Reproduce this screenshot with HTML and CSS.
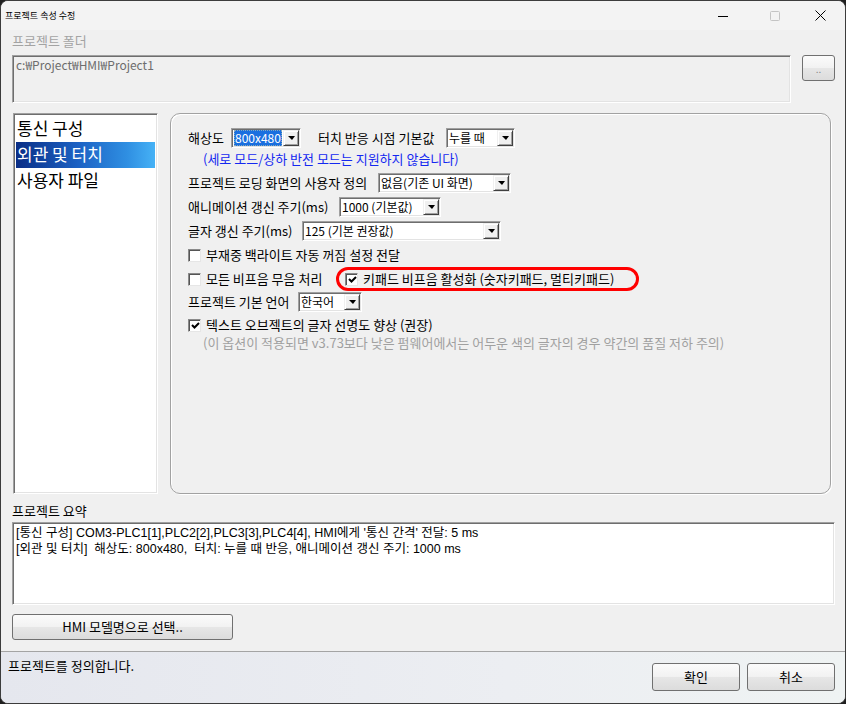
FILE: index.html
```html
<!DOCTYPE html>
<html>
<head>
    <meta charset="UTF-8">
    <title>프로젝트 속성 수정</title>
    <link rel="stylesheet" href="styles.css">
</head>
<body>
<div class="window">
    <div class="titlebar">
        <span class="title">프로젝트 속성 수정</span>
        <span class="cap min"><svg width="10" height="10"><path d="M0 5.5h10" stroke="#000" stroke-width="1"/></svg></span>
        <span class="cap max"><svg width="10" height="10"><rect x="0.5" y="0.5" width="9" height="9" rx="1" fill="none" stroke="#c4c4c4"/></svg></span>
        <span class="cap close"><svg width="11" height="11"><path d="M0.5 0.5L10.5 10.5M10.5 0.5L0.5 10.5" stroke="#000" stroke-width="1"/></svg></span>
    </div>

    <div class="content">
        <div class="label disabled">프로젝트 폴더</div>
        <div class="folder-row">
            <div class="textbox folder">c:₩Project₩HMI₩Project1</div>
            <a href="javascript:;" class="btn dots">..</a>
        </div>

        <div class="middle">
            <ul class="list">
                <li>통신 구성</li>
                <li class="on">외관 및 터치</li>
                <li>사용자 파일</li>
            </ul>

            <div class="panel">
                <div class="row">
                    <span class="lbl l-res">해상도</span>
                    <span class="combo c-res"><span class="val"><em class="sel">800x480</em></span><i class="arrow"></i></span>
                    <span class="lbl l-touch">터치 반응 시점 기본값</span>
                    <span class="combo c-touch"><span class="val">누를 때</span><i class="arrow"></i></span>
                </div>
                <div class="note">(세로 모드/상하 반전 모드는 지원하지 않습니다)</div>
                <div class="row">
                    <span class="lbl l-load">프로젝트 로딩 화면의 사용자 정의</span>
                    <span class="combo c-load"><span class="val">없음(기존 UI 화면)</span><i class="arrow"></i></span>
                </div>
                <div class="row">
                    <span class="lbl l-anim">애니메이션 갱신 주기(ms)</span>
                    <span class="combo c-anim"><span class="val">1000 (기본값)</span><i class="arrow"></i></span>
                </div>
                <div class="row">
                    <span class="lbl l-text">글자 갱신 주기(ms)</span>
                    <span class="combo c-text"><span class="val">125 (기본 권장값)</span><i class="arrow"></i></span>
                </div>
                <div class="row">
                    <label class="check"><i class="box"></i>부재중 백라이트 자동 꺼짐 설정 전달</label>
                </div>
                <div class="row">
                    <label class="check l-mute"><i class="box"></i>모든 비프음 무음 처리</label>
                    <div class="mark">
                        <label class="check"><i class="box on"><svg width="11" height="11"><path d="M2 5l2.5 2.5L9 3" fill="none" stroke="#000" stroke-width="2"/></svg></i>키패드 비프음 활성화 (숫자키패드, 멀티키패드)</label>
                    </div>
                </div>
                <div class="row short">
                    <span class="lbl l-lang">프로젝트 기본 언어</span>
                    <span class="combo c-lang"><span class="val">한국어</span><i class="arrow"></i></span>
                </div>
                <div class="row">
                    <label class="check"><i class="box on"><svg width="11" height="11"><path d="M2 5l2.5 2.5L9 3" fill="none" stroke="#000" stroke-width="2"/></svg></i>텍스트 오브젝트의 글자 선명도 향상 (권장)</label>
                </div>
                <div class="hint">(이 옵션이 적용되면 v3.73보다 낮은 펌웨어에서는 어두운 색의 글자의 경우 약간의 품질 저하 주의)</div>
            </div>
        </div>

        <div class="label summary-label">프로젝트 요약</div>
        <div class="summary">
            <p>[통신 구성] COM3-PLC1[1],PLC2[2],PLC3[3],PLC4[4], HMI에게 '통신 간격' 전달: 5 ms</p>
            <p>[외관 및 터치]&nbsp; 해상도: 800x480,&nbsp; 터치: 누를 때 반응, 애니메이션 갱신 주기: 1000 ms</p>
        </div>

        <a href="javascript:;" class="btn model">HMI 모델명으로 선택..</a>
    </div>

    <div class="status">
        <span class="status-text">프로젝트를 정의합니다.</span>
        <a href="javascript:;" class="btn ok">확인</a>
        <a href="javascript:;" class="btn cancel">취소</a>
    </div>
</div>
</body>
</html>
```

FILE: styles.css
```css
body, div, ul, li, a, p, span, label {
    margin: 0;
    padding: 0;
}

ul, li {
    list-style: none;
}

a {
    text-decoration: none;
    color: #000;
}

body {
    background: #1f1f1f;
    font-family: "Noto Sans CJK KR", "Noto Sans", sans-serif;
    font-size: 13px;
    line-height: 14px;
    color: #000;
}

/*창 틀*/
.window {
    width: 846px;
    height: 704px;
    box-sizing: border-box;
    border: 1px solid #3c3c3c;
    border-radius: 8px;
    overflow: hidden;
    background: #f0f0f0;
    display: flex;
    flex-direction: column;
}

.titlebar {
    height: 29px;
    flex-shrink: 0;
    display: flex;
    align-items: center;
    padding-left: 4px;
    background: #f3f3f3;
}

.titlebar .title {
    flex: 1;
    font-size: 9px;
}

.cap {
    display: flex;
    justify-content: center;
    align-items: center;
    height: 29px;
}

.cap.min {
    width: 64px;
}

.cap.max {
    width: 40px;
}

.cap.close {
    width: 50px;
}

/*본문*/
.content {
    padding: 4px 10px 0 11px;
}

.label {
    line-height: 14px;
}

.label.disabled {
    color: #a3a3a3;
}

.folder-row {
    display: flex;
    margin-top: 7px;
}

.textbox {
    box-sizing: border-box;
    border: 1px solid;
    border-color: #a0a0a0 #fff #fff #a0a0a0;
    box-shadow: inset 1px 1px #6e6e6e, inset -1px -1px #e3e3e3;
}

.textbox.folder {
    flex: 1;
    height: 48px;
    padding: 2px 3px;
    color: #6d6d6d;
    font-size: 12px;
}

.btn {
    display: flex;
    justify-content: center;
    align-items: center;
    box-sizing: border-box;
    border: 1px solid #707070;
    border-radius: 3px;
    background: linear-gradient(#fbfbfb 0%, #f2f2f2 48%, #e6e6e6 52%, #dcdcdc 100%);
}

.btn.dots {
    width: 33px;
    height: 26px;
    margin-left: 11px;
    align-items: flex-end;
    padding-bottom: 6px;
    color: #888;
    font-size: 10px;
    line-height: 10px;
}

/*목록과 설정 영역*/
.middle {
    display: flex;
    height: 381px;
    margin-top: 10px;
}

.list {
    width: 145px;
    margin-left: 1px;
    box-sizing: border-box;
    padding: 2px;
    background: #fff;
    border: 1px solid;
    border-color: #a0a0a0 #fff #fff #a0a0a0;
    box-shadow: inset 1px 1px #6e6e6e, inset -1px -1px #e3e3e3;
}

.list li {
    height: 26px;
    line-height: 24px;
    padding-left: 1px;
    font-size: 17px;
}

.list li.on {
    color: #fff;
    background: linear-gradient(to right, #0a2e86 0%, #1c62c4 45%, #2f8fe2 80%, #46b2f6 100%);
}

.panel {
    width: 661px;
    margin-left: 12px;
    box-sizing: border-box;
    padding: 12px 0 0 17px;
    border: 1px solid #a2a2a2;
    border-radius: 10px;
    box-shadow: 1px 1px 0 #fff, inset 1px 1px 0 #fff;
}

.panel .row {
    display: flex;
    align-items: center;
    height: 24px;
}

.panel .row.short {
    height: 22px;
}

.panel .note {
    height: 21px;
    line-height: 18px;
    padding-left: 15px;
    color: #1428f0;
}

.panel .hint {
    padding-left: 15px;
    line-height: 12px;
    color: #a0a0a0;
}

/*항목 이름 폭*/
.lbl {
    white-space: nowrap;
}

.l-res {
    width: 43px;
}

.l-touch {
    width: 128px;
    margin-left: 17px;
}

.l-load {
    width: 190px;
}

.l-anim {
    width: 151px;
}

.l-text {
    width: 114px;
}

.l-lang {
    width: 110px;
}

.l-mute {
    width: 148px;
}

/*콤보 박스*/
.combo {
    display: flex;
    height: 20px;
    box-sizing: border-box;
    background: #fff;
    border: 1px solid;
    border-color: #a0a0a0 #fff #fff #a0a0a0;
    box-shadow: inset 1px 1px #6e6e6e, inset -1px -1px #e3e3e3;
    padding: 1px;
    font-size: 12px;
}

.combo .val {
    flex: 1;
    line-height: 16px;
    padding-left: 1px;
    white-space: nowrap;
}

.combo .sel {
    display: block;
    font-style: normal;
    color: #fff;
    background: #1a6fdf;
    outline: 1px dotted #8ab;
    outline-offset: -1px;
    margin-right: 1px;
    padding-left: 1px;
}

.combo .arrow {
    width: 16px;
    height: 16px;
    flex-shrink: 0;
    box-sizing: border-box;
    display: flex;
    justify-content: center;
    align-items: center;
    background: #f0f0f0;
    border: 1px solid;
    border-color: #f0f0f0 #404040 #404040 #f0f0f0;
    box-shadow: inset 1px 1px #fff, inset -1px -1px #a0a0a0;
}

.combo .arrow::after {
    content: "";
    border-left: 4px solid transparent;
    border-right: 3px solid transparent;
    border-top: 4px solid #000;
}

.c-res {
    width: 70px;
}

.c-touch {
    width: 69px;
}

.c-load {
    width: 133px;
}

.c-anim {
    width: 102px;
}

.c-text {
    width: 199px;
}

.c-lang {
    width: 64px;
}

/*체크 박스*/
.check {
    display: flex;
    align-items: center;
    white-space: nowrap;
}

.check .box {
    width: 13px;
    height: 13px;
    flex-shrink: 0;
    box-sizing: border-box;
    margin-right: 5px;
    background: #fff;
    border: 1px solid;
    border-color: #8a8a8a #e6e6e6 #e6e6e6 #8a8a8a;
    box-shadow: inset 1px 1px #555;
    display: flex;
    justify-content: center;
    align-items: center;
}

.check .box svg {
    margin: 1px 0 0 1px;
}

.mark {
    display: flex;
    align-items: center;
    width: 303px;
    height: 24px;
    box-sizing: border-box;
    padding: 0 0 0 6px;
    border: 3px solid #ff0000;
    border-radius: 12px;
}

/*요약*/
.summary-label {
    margin-top: 9px;
    line-height: 16px;
}

.summary {
    width: 823px;
    height: 83px;
    margin-top: 3px;
    box-sizing: border-box;
    padding: 2px 3px;
    background: #fff;
    border: 1px solid;
    border-color: #a0a0a0 #fff #fff #a0a0a0;
    box-shadow: inset 1px 1px #6e6e6e, inset -1px -1px #e3e3e3;
    font-family: "Liberation Sans", "Noto Sans CJK KR", sans-serif;
    font-size: 12.5px;
}

.summary p {
    line-height: 16px;
}

.btn.model {
    width: 221px;
    height: 26px;
    margin-top: 9px;
}

/*상태 표시줄*/
.status {
    margin-top: auto;
    height: 52px;
    box-sizing: border-box;
    display: flex;
    align-items: flex-start;
    padding: 0 10px 0 7px;
    border-top: 1px solid #a4a4a4;
    background: linear-gradient(to right, #e5e7ee 0%, #eceef2 60%, #eff3f3 100%);
}

.status-text {
    flex: 1;
    margin-top: 7px;
}

.btn.ok, .btn.cancel {
    width: 88px;
    height: 28px;
    margin-top: 11px;
}

.btn.cancel {
    margin-left: 7px;
}
```
